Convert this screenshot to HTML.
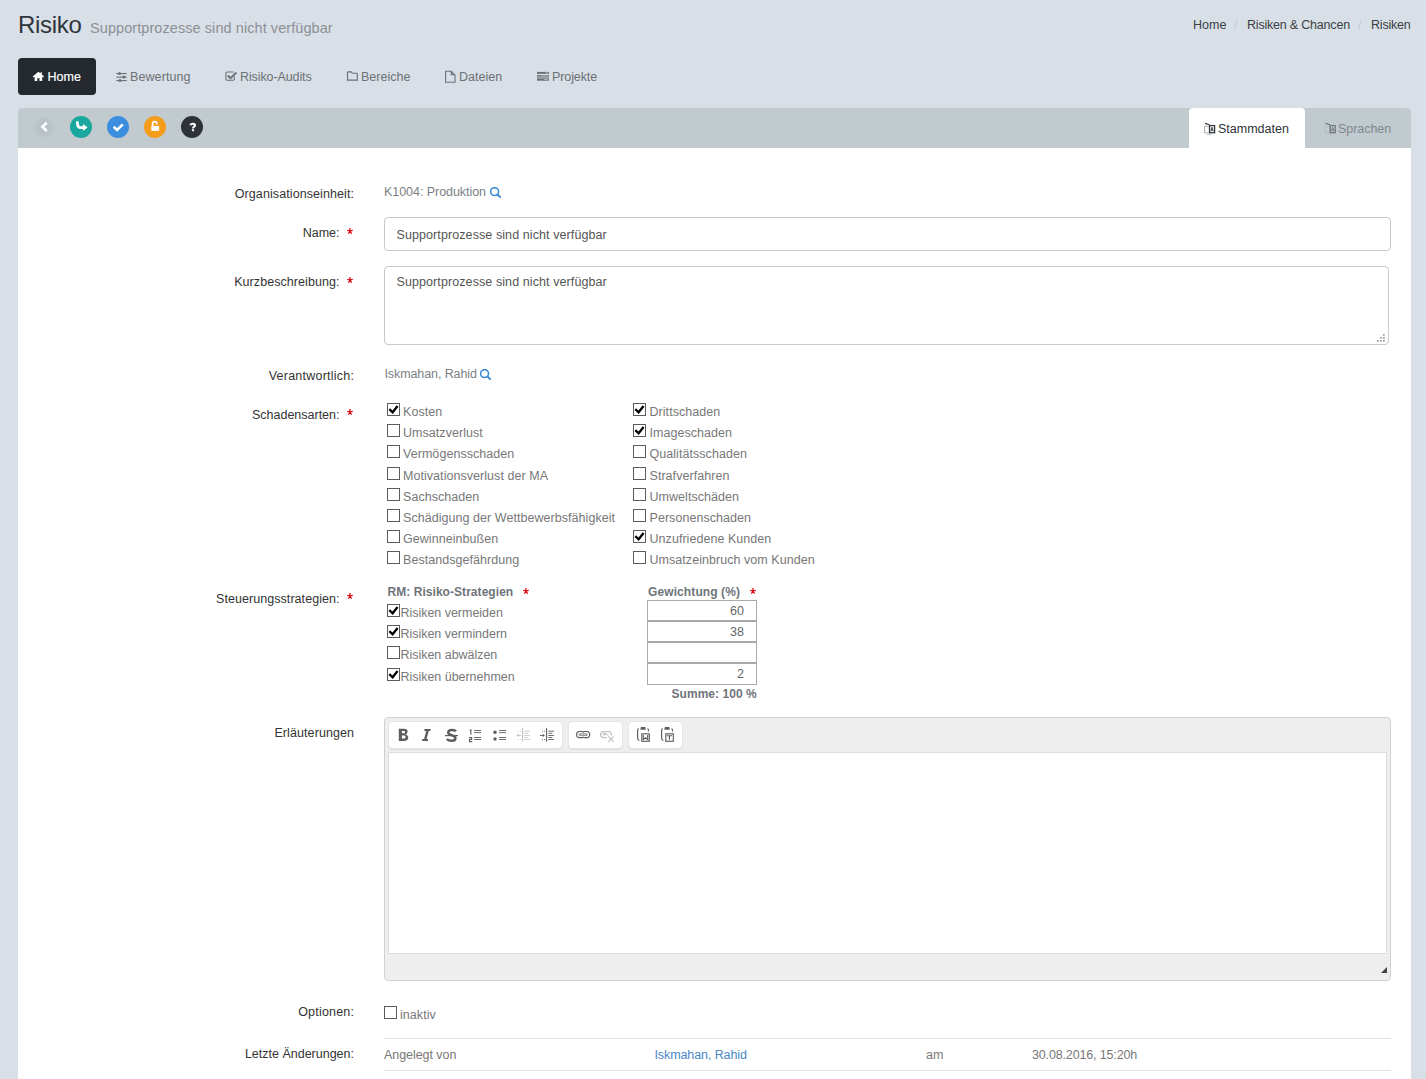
<!DOCTYPE html><html><head><meta charset="utf-8"><style>
*{box-sizing:border-box}
html,body{margin:0;padding:0}
body{width:1426px;height:1079px;overflow:hidden;background:#d9dfe6;font-family:"Liberation Sans",sans-serif;font-size:12.5px;color:#333;position:relative}
.t{position:absolute;white-space:nowrap;line-height:18px}
.lbl{position:absolute;white-space:nowrap;line-height:18px;color:#333}
.ast{position:absolute;color:#d0121b;font-size:14px;line-height:18px;left:347px}
.cb{position:absolute;width:13px;height:13px;border:1px solid #5c5c5c;background:#fff}
.cb svg{position:absolute;left:-1px;top:-1px}
.cbl{position:absolute;white-space:nowrap;line-height:18px;color:#777;letter-spacing:0.05px}
.nav{position:absolute;white-space:nowrap;line-height:18px;color:#6f747a;top:68px}
svg{display:block}
.ic{position:absolute}
</style></head><body>
<div class="t" style="left:18px;top:10px;font-size:24px;line-height:30px;color:#2f353b;letter-spacing:-0.3px">Risiko</div>
<div class="t" style="left:90px;top:18px;font-size:14.5px;line-height:20px;color:#8c9096;letter-spacing:0.07px">Supportprozesse sind nicht verfügbar</div>
<div class="t" style="left:1193px;top:16px;color:#3a3f45">Home</div>
<div class="t" style="left:1234px;top:16px;color:#c3c9cf">/</div>
<div class="t" style="left:1247px;top:16px;color:#3a3f45;letter-spacing:-0.2px">Risiken &amp; Chancen</div>
<div class="t" style="left:1358px;top:16px;color:#c3c9cf">/</div>
<div class="t" style="left:1371px;top:16px;color:#3a3f45;letter-spacing:-0.2px">Risiken</div>
<div style="position:absolute;left:18px;top:58px;width:78px;height:37px;background:#24292f;border-radius:4px"></div>
<svg class="ic" style="left:0;top:60px" width="620" height="30" viewBox="0 60 620 30">
<path d="M38.4 71.7 L32.7 76.6 L33.6 77.5 L34.6 76.7 V81.1 H37.3 V78.3 H39.5 V81.1 H42.2 V76.7 L43.2 77.5 L44.1 76.6 L41.9 74.7 V72.2 H40.6 V73.5 Z" fill="#fff"/>
<g fill="#6c7177"><rect x="116.3" y="73" width="10.5" height="1.1"/><rect x="116.3" y="76.6" width="10.5" height="1.1"/><rect x="116.3" y="80" width="10.5" height="1.1"/>
<circle cx="119.5" cy="73.5" r="1.5"/><circle cx="123.9" cy="77.1" r="1.5"/><circle cx="120" cy="80.5" r="1.5"/></g>
<path d="M234.3 76.5 V79 Q234.3 80.2 233.1 80.2 H227.1 Q225.9 80.2 225.9 79 V73.2 Q225.9 72 227.1 72 H233.5" fill="none" stroke="#6c7177" stroke-width="1.1"/>
<path d="M227.8 75.5 L230.5 78.2 L236.4 72.6" fill="none" stroke="#6c7177" stroke-width="2"/>
<path d="M347.5 80.1 V72.6 Q347.5 71.9 348.2 71.9 H351.2 L352.3 73.2 H356.6 Q357.3 73.2 357.3 73.9 V80.1 Z" fill="none" stroke="#6c7177" stroke-width="1.15"/>
<path d="M445.6 82.2 V71.3 H451.2 L455 75 V82.2 Z M451.2 71.3 V74.6 H455" fill="none" stroke="#6c7177" stroke-width="1.1" stroke-linejoin="miter"/>
<rect x="537" y="71.9" width="12" height="2" fill="#6c7177"/><rect x="537" y="75.1" width="12" height="1.6" fill="#6c7177"/><rect x="537" y="76.7" width="12" height="1.5" fill="#9aa0a5"/><rect x="537" y="78.4" width="12" height="2.3" fill="#6c7177"/>
<rect x="545.5" y="72.4" width="2.5" height="0.9" fill="#b5bbc0"/><rect x="541.3" y="75.5" width="6.7" height="0.8" fill="#b5bbc0"/><rect x="544" y="78.9" width="4" height="0.9" fill="#b5bbc0"/>
</svg>
<div class="nav" style="left:47.5px;color:#fff;font-weight:normal;letter-spacing:0px;-webkit-text-stroke:0.15px #fff">Home</div>
<div class="nav" style="left:130px;letter-spacing:0.1px;color:#6c7177">Bewertung</div>
<div class="nav" style="left:240px;letter-spacing:-0.1px;color:#6c7177">Risiko-Audits</div>
<div class="nav" style="left:361px;letter-spacing:0px;color:#6c7177">Bereiche</div>
<div class="nav" style="left:459px;letter-spacing:0px;color:#6c7177">Dateien</div>
<div class="nav" style="left:552px;letter-spacing:-0.1px;color:#6c7177">Projekte</div>
<div style="position:absolute;left:18px;top:108px;width:1393px;height:40px;background:#c0cacf;border-radius:4px 4px 0 0"></div>
<svg class="ic" style="left:18px;top:108px" width="200" height="40" viewBox="18 108 200 40">
<defs><radialGradient id="gb" cx="0.5" cy="0.5" r="0.5"><stop offset="0.6" stop-color="#b8c2c8"/><stop offset="1" stop-color="#c0cacf"/></radialGradient></defs>
<circle cx="44" cy="127" r="11.5" fill="url(#gb)"/>
<path d="M46.8 122.6 L42.4 126.8 L46.8 131" fill="none" stroke="#fff" stroke-width="2.6" stroke-linejoin="miter"/>
<circle cx="81" cy="127" r="11" fill="#1aa89e"/>
<path d="M77.4 121.3 Q77 127.6 80.6 127.6 H83.6" fill="none" stroke="#fff" stroke-width="2.8"/>
<path d="M83 123.9 L87.6 127.4 L83 130.8 Z" fill="#fff"/>
<circle cx="118" cy="127" r="11" fill="#3b8fde"/>
<path d="M113.6 126.8 L117.1 130 L122.8 124.3" fill="none" stroke="#fff" stroke-width="2.6"/>
<circle cx="155" cy="127" r="11" fill="#f49d1d"/>
<path d="M152.6 126.3 V123.6 Q152.6 121.7 154.7 121.7 Q156.8 121.7 156.8 123.6 V124.4" fill="none" stroke="#fff" stroke-width="1.7"/>
<rect x="151.3" y="126" width="7.8" height="4.9" fill="#fff"/>
<circle cx="192" cy="127" r="11" fill="#2d3237"/>
<path d="M190.6 125.3 Q190.6 123.8 192.9 123.8 Q195 123.8 195 125.3 Q195 126.4 193.9 126.9 Q193 127.3 193 128.6" fill="none" stroke="#fff" stroke-width="2.1"/>
<rect x="191.9" y="129.3" width="2.2" height="1.9" fill="#fff"/>
</svg>
<div style="position:absolute;left:1189px;top:108px;width:116px;height:41px;background:#fff;border-radius:4px 4px 0 0"></div>
<svg class="ic" style="left:1200px;top:118px" width="200" height="20" viewBox="1200 118 200 20">
<g id="ti">
<rect x="1204.5" y="126.3" width="4.8" height="6.4" fill="none" stroke="#b0b3b6" stroke-width="1"/>
<path d="M1205 123.4 L1209.5 124.8" stroke="#2f353b" stroke-width="1.2"/>
<rect x="1209.6" y="125.6" width="5" height="7.1" fill="none" stroke="#2f353b" stroke-width="1.3"/>
<path d="M1211 131.2 L1212.1 127.3 L1213.2 131.2 M1211.4 130 H1212.8" fill="none" stroke="#2f353b" stroke-width="0.9"/>
<path d="M1206.5 134.2 Q1208.5 135 1211 134.2" fill="none" stroke="#b0b3b6" stroke-width="0.9"/>
</g>
<g transform="translate(120.6 0)" opacity="0.55"><use href="#ti"/></g>
</svg>
<div class="t" style="left:1218px;top:120px;color:#2f353b;letter-spacing:0px">Stammdaten</div>
<div class="t" style="left:1338px;top:120px;color:#80878d;letter-spacing:-0.05px">Sprachen</div>
<div style="position:absolute;left:18px;top:148px;width:1393px;height:940px;background:#fff"></div>
<div class="lbl" style="right:1071.91px;top:185px;letter-spacing:0.09px">Organisationseinheit:</div>
<div class="t" style="left:384px;top:182.5px;color:#7b7f84;letter-spacing:-0.05px">K1004: Produktion</div>
<div class="ic" style="left:489.8px;top:187px"><svg width="12" height="12" viewBox="0 0 12 12"><circle cx="4.6" cy="4.6" r="3.95" fill="none" stroke="#3b8ad6" stroke-width="1.55"/><path d="M7.5 7.5 L10.2 10.2" stroke="#3b8ad6" stroke-width="1.9" stroke-linecap="round"/></svg></div>
<div class="lbl" style="right:1086.5px;top:223.5px;letter-spacing:0px">Name:</div>
<svg class="ic" style="left:346.2px;top:226.9px" width="8" height="8" viewBox="346.2 226.9 8 8"><path d="M350.2 230.9 V228.0 M350.2 230.9 L347.4 230.3 M350.2 230.9 L353.0 230.3 M350.2 230.9 L348.59999999999997 233.70000000000002 M350.2 230.9 L351.8 233.70000000000002" stroke="#dc0a12" stroke-width="1.25" stroke-linecap="butt"/></svg>
<div style="position:absolute;left:384px;top:217px;width:1007px;height:34px;border:1px solid #c9c9c9;border-radius:4px;background:#fff"></div>
<div class="t" style="left:396.5px;top:226.2px;color:#555;letter-spacing:0.09px">Supportprozesse sind nicht verfügbar</div>
<div class="lbl" style="right:1086.43px;top:272.5px;letter-spacing:0.07px">Kurzbeschreibung:</div>
<svg class="ic" style="left:346.2px;top:275.9px" width="8" height="8" viewBox="346.2 275.9 8 8"><path d="M350.2 279.9 V277.0 M350.2 279.9 L347.4 279.29999999999995 M350.2 279.9 L353.0 279.29999999999995 M350.2 279.9 L348.59999999999997 282.7 M350.2 279.9 L351.8 282.7" stroke="#dc0a12" stroke-width="1.25" stroke-linecap="butt"/></svg>
<div style="position:absolute;left:384px;top:266px;width:1005px;height:79px;border:1px solid #c9c9c9;border-radius:4px;background:#fff"></div>
<div class="t" style="left:396.5px;top:273.2px;color:#555;letter-spacing:0.09px">Supportprozesse sind nicht verfügbar</div>
<svg class="ic" style="left:1370px;top:328px" width="20" height="20" viewBox="1370 328 20 20"><g fill="#999"><rect x="1383" y="334" width="1.7" height="1.7"/><rect x="1380" y="337" width="1.7" height="1.7"/><rect x="1383" y="337" width="1.7" height="1.7"/><rect x="1377" y="340" width="1.7" height="1.7"/><rect x="1380" y="340" width="1.7" height="1.7"/><rect x="1383" y="340" width="1.7" height="1.7"/></g></svg>
<div class="lbl" style="right:1071.76px;top:366.5px;letter-spacing:0.24px">Verantwortlich:</div>
<div class="t" style="left:384.5px;top:365px;color:#7b7f84;letter-spacing:-0.1px">Iskmahan, Rahid</div>
<div class="ic" style="left:479.5px;top:368.5px"><svg width="12" height="12" viewBox="0 0 12 12"><circle cx="4.6" cy="4.6" r="3.95" fill="none" stroke="#3b8ad6" stroke-width="1.55"/><path d="M7.5 7.5 L10.2 10.2" stroke="#3b8ad6" stroke-width="1.9" stroke-linecap="round"/></svg></div>
<div class="lbl" style="right:1086.5px;top:406px;letter-spacing:0px">Schadensarten:</div>
<svg class="ic" style="left:346.2px;top:408.4px" width="8" height="8" viewBox="346.2 408.4 8 8"><path d="M350.2 412.4 V409.5 M350.2 412.4 L347.4 411.79999999999995 M350.2 412.4 L353.0 411.79999999999995 M350.2 412.4 L348.59999999999997 415.2 M350.2 412.4 L351.8 415.2" stroke="#dc0a12" stroke-width="1.25" stroke-linecap="butt"/></svg>
<div class="cb" style="left:387px;top:403px"><svg width="13" height="13" viewBox="0 0 13 13"><path d="M2.3 6.2 L5.6 9.3 L10.6 3.0" fill="none" stroke="#000" stroke-width="2.3" stroke-linecap="butt" stroke-linejoin="miter"/></svg></div>
<div class="cbl" style="left:403px;top:402.7px;">Kosten</div>
<div class="cb" style="left:633px;top:403px"><svg width="13" height="13" viewBox="0 0 13 13"><path d="M2.3 6.2 L5.6 9.3 L10.6 3.0" fill="none" stroke="#000" stroke-width="2.3" stroke-linecap="butt" stroke-linejoin="miter"/></svg></div>
<div class="cbl" style="left:649.5px;top:402.7px;">Drittschaden</div>
<div class="cb" style="left:387px;top:424px"></div>
<div class="cbl" style="left:403px;top:423.7px;">Umsatzverlust</div>
<div class="cb" style="left:633px;top:424px"><svg width="13" height="13" viewBox="0 0 13 13"><path d="M2.3 6.2 L5.6 9.3 L10.6 3.0" fill="none" stroke="#000" stroke-width="2.3" stroke-linecap="butt" stroke-linejoin="miter"/></svg></div>
<div class="cbl" style="left:649.5px;top:423.7px;">Imageschaden</div>
<div class="cb" style="left:387px;top:445px"></div>
<div class="cbl" style="left:403px;top:444.7px;">Vermögensschaden</div>
<div class="cb" style="left:633px;top:445px"></div>
<div class="cbl" style="left:649.5px;top:444.7px;">Qualitätsschaden</div>
<div class="cb" style="left:387px;top:467px"></div>
<div class="cbl" style="left:403px;top:466.7px;">Motivationsverlust der MA</div>
<div class="cb" style="left:633px;top:467px"></div>
<div class="cbl" style="left:649.5px;top:466.7px;">Strafverfahren</div>
<div class="cb" style="left:387px;top:488px"></div>
<div class="cbl" style="left:403px;top:487.7px;">Sachschaden</div>
<div class="cb" style="left:633px;top:488px"></div>
<div class="cbl" style="left:649.5px;top:487.7px;">Umweltschäden</div>
<div class="cb" style="left:387px;top:509px"></div>
<div class="cbl" style="left:403px;top:508.70000000000005px;">Schädigung der Wettbewerbsfähigkeit</div>
<div class="cb" style="left:633px;top:509px"></div>
<div class="cbl" style="left:649.5px;top:508.70000000000005px;">Personenschaden</div>
<div class="cb" style="left:387px;top:530px"></div>
<div class="cbl" style="left:403px;top:529.7px;">Gewinneinbußen</div>
<div class="cb" style="left:633px;top:530px"><svg width="13" height="13" viewBox="0 0 13 13"><path d="M2.3 6.2 L5.6 9.3 L10.6 3.0" fill="none" stroke="#000" stroke-width="2.3" stroke-linecap="butt" stroke-linejoin="miter"/></svg></div>
<div class="cbl" style="left:649.5px;top:529.7px;">Unzufriedene Kunden</div>
<div class="cb" style="left:387px;top:551px"></div>
<div class="cbl" style="left:403px;top:550.7px;">Bestandsgefährdung</div>
<div class="cb" style="left:633px;top:551px"></div>
<div class="cbl" style="left:649.5px;top:550.7px;">Umsatzeinbruch vom Kunden</div>
<div class="lbl" style="right:1086.44px;top:589.6px;letter-spacing:0.06px">Steuerungsstrategien:</div>
<svg class="ic" style="left:346.2px;top:592.0px" width="8" height="8" viewBox="346.2 592.0 8 8"><path d="M350.2 596.0 V593.1 M350.2 596.0 L347.4 595.4 M350.2 596.0 L353.0 595.4 M350.2 596.0 L348.59999999999997 598.8 M350.2 596.0 L351.8 598.8" stroke="#dc0a12" stroke-width="1.25" stroke-linecap="butt"/></svg>
<div class="t" style="left:387.5px;top:583px;font-weight:bold;font-size:12px;color:#6f747a;letter-spacing:0.05px">RM: Risiko-Strategien</div>
<svg class="ic" style="left:522px;top:586.5px" width="8" height="8" viewBox="522 586.5 8 8"><path d="M526 590.5 V587.6 M526 590.5 L523.2 589.9 M526 590.5 L528.8 589.9 M526 590.5 L524.4 593.3 M526 590.5 L527.6 593.3" stroke="#dc0a12" stroke-width="1.25" stroke-linecap="butt"/></svg>
<div class="t" style="left:648px;top:583px;font-weight:bold;font-size:12px;color:#6f747a;letter-spacing:0.1px">Gewichtung (%)</div>
<svg class="ic" style="left:748.5px;top:586.5px" width="8" height="8" viewBox="748.5 586.5 8 8"><path d="M752.5 590.5 V587.6 M752.5 590.5 L749.7 589.9 M752.5 590.5 L755.3 589.9 M752.5 590.5 L750.9 593.3 M752.5 590.5 L754.1 593.3" stroke="#dc0a12" stroke-width="1.25" stroke-linecap="butt"/></svg>
<div class="cb" style="left:387px;top:604px"><svg width="13" height="13" viewBox="0 0 13 13"><path d="M2.3 6.2 L5.6 9.3 L10.6 3.0" fill="none" stroke="#000" stroke-width="2.3" stroke-linecap="butt" stroke-linejoin="miter"/></svg></div>
<div class="cbl" style="left:400.5px;top:603.7px;letter-spacing:-0.03px">Risiken vermeiden</div>
<div style="position:absolute;left:647px;top:600px;width:110px;height:21px;border:1px solid #a9a9a9;background:#fff"></div>
<div class="t" style="left:647px;width:97px;text-align:right;top:602px;color:#666">60</div>
<div class="cb" style="left:387px;top:625px"><svg width="13" height="13" viewBox="0 0 13 13"><path d="M2.3 6.2 L5.6 9.3 L10.6 3.0" fill="none" stroke="#000" stroke-width="2.3" stroke-linecap="butt" stroke-linejoin="miter"/></svg></div>
<div class="cbl" style="left:400.5px;top:624.7px;letter-spacing:-0.03px">Risiken vermindern</div>
<div style="position:absolute;left:647px;top:621px;width:110px;height:21px;border:1px solid #a9a9a9;background:#fff"></div>
<div class="t" style="left:647px;width:97px;text-align:right;top:623px;color:#666">38</div>
<div class="cb" style="left:387px;top:646px"></div>
<div class="cbl" style="left:400.5px;top:645.7px;letter-spacing:-0.03px">Risiken abwälzen</div>
<div style="position:absolute;left:647px;top:642px;width:110px;height:21px;border:1px solid #a9a9a9;background:#fff"></div>
<div class="cb" style="left:387px;top:668px"><svg width="13" height="13" viewBox="0 0 13 13"><path d="M2.3 6.2 L5.6 9.3 L10.6 3.0" fill="none" stroke="#000" stroke-width="2.3" stroke-linecap="butt" stroke-linejoin="miter"/></svg></div>
<div class="cbl" style="left:400.5px;top:667.7px;letter-spacing:-0.03px">Risiken übernehmen</div>
<div style="position:absolute;left:647px;top:663px;width:110px;height:21.5px;border:1px solid #a9a9a9;background:#fff"></div>
<div class="t" style="left:647px;width:97px;text-align:right;top:665px;color:#666">2</div>
<div class="t" style="left:671.5px;top:684.6px;font-weight:bold;font-size:12px;color:#6f747a;letter-spacing:0.05px">Summe: 100 %</div>
<div class="lbl" style="right:1071.91px;top:723.6px;letter-spacing:0.09px">Erläuterungen</div>
<div style="position:absolute;left:384px;top:717px;width:1007px;height:264px;border:1px solid #d1d1d1;border-radius:4px;background:#eee"></div>
<div style="position:absolute;left:388px;top:752px;width:999px;height:202px;border:1px solid #dcdcdc;background:#fff"></div>
<div style="position:absolute;left:388.5px;top:722px;width:173.0px;height:26px;background:#fff;border-radius:4px;box-shadow:0 0 0 1px #e6e6e6,0 1px 0 1px #dcdcdc"></div>
<div style="position:absolute;left:568.5px;top:722px;width:53.0px;height:26px;background:#fff;border-radius:4px;box-shadow:0 0 0 1px #e6e6e6,0 1px 0 1px #dcdcdc"></div>
<div style="position:absolute;left:628.5px;top:722px;width:53.0px;height:26px;background:#fff;border-radius:4px;box-shadow:0 0 0 1px #e6e6e6,0 1px 0 1px #dcdcdc"></div>
<svg class="ic" style="left:1380px;top:966px" width="8" height="8" viewBox="0 0 8 8"><path d="M7 1 V7 H1 Z" fill="#444"/></svg>
<svg class="ic" style="left:384px;top:717px" width="310" height="34" viewBox="384 717 310 34">
<path fill-rule="evenodd" fill="#5e5e5e" d="M398.8 728.8 H404.2 C406.6 728.8 407.6 730 407.6 731.5 C407.6 732.9 406.8 733.9 405.8 734.4 C407.3 734.8 408.3 736 408.3 737.6 C408.3 739.6 407 740.9 404.6 740.9 H398.8 Z M401.9 731.1 H403.9 C404.7 731.1 405 731.6 405 732.2 C405 732.8 404.6 733.3 403.9 733.3 H401.9 Z M401.9 735.6 H404.2 C405.1 735.6 405.5 736.2 405.5 737.1 C405.5 737.9 405 738.6 404.2 738.6 H401.9 Z"/>
<path fill="#5e5e5e" d="M424.6 729.1 H430.7 L430.4 730.9 H428.7 L426.6 739.1 H428.3 L427.9 740.9 H422 L422.4 739.1 H424.1 L426.2 730.9 H424.3 Z"/>
<path fill="none" stroke="#5e5e5e" stroke-width="2.5" d="M456 731.3 C455.2 730.2 453.8 729.9 452.2 729.9 C449.8 729.9 448.2 730.8 448.2 732.5 C448.2 734.3 449.9 734.8 451.8 735.3 C453.9 735.8 455.4 736.4 455.4 738.2 C455.4 739.9 453.8 740.8 451.4 740.8 C449.6 740.8 448 740.3 446.8 739.2"/>
<rect x="445" y="735" width="13" height="1.2" fill="#5e5e5e"/>
<g fill="none" stroke="#5e5e5e" stroke-width="1.1">
<path d="M469.7 730.6 L470.9 730 V734.8"/>
<path d="M469 737.5 H471.7 V739.4 H469.5 V741.6 H472.2"/>
</g>
<g fill="#5e5e5e">
<rect x="474.1" y="730.1" width="7" height="0.9"/><rect x="474.1" y="732.2" width="7" height="0.9"/><rect x="474.1" y="737" width="7" height="0.9"/><rect x="474.1" y="739.1" width="7" height="0.9"/>
<circle cx="495" cy="732.2" r="1.7"/><circle cx="495" cy="739" r="1.7"/>
<rect x="499.1" y="730.1" width="7" height="0.9"/><rect x="499.1" y="732.2" width="7" height="0.9"/><rect x="499.1" y="737" width="7" height="0.9"/><rect x="499.1" y="739.1" width="7" height="0.9"/>
</g>
<g fill="#c2c2c2">
<rect x="518" y="730.7" width="0.9" height="0.9"/><rect x="520" y="730.7" width="0.9" height="0.9"/><rect x="518" y="739.1" width="0.9" height="0.9"/><rect x="520" y="739.1" width="0.9" height="0.9"/>
<path d="M516.3 735.4 L518.6 733.7 V737.1 Z"/><rect x="518" y="735" width="3" height="0.9"/>
<rect x="522" y="728.2" width="1.1" height="13.4"/>
<rect x="524.2" y="730.7" width="5.8" height="0.8"/><rect x="524.2" y="732.8" width="4" height="0.8"/><rect x="524.2" y="735" width="5.8" height="0.8"/><rect x="524.2" y="737.1" width="4" height="0.8"/><rect x="524.2" y="739.1" width="5.8" height="0.8"/>
</g>
<g fill="#5e5e5e">
<rect x="542" y="730.7" width="0.9" height="0.9"/><rect x="544" y="730.7" width="0.9" height="0.9"/><rect x="542" y="739.1" width="0.9" height="0.9"/><rect x="544" y="739.1" width="0.9" height="0.9"/>
<path d="M545 735.4 L542.7 733.7 V737.1 Z"/><rect x="540" y="735" width="3" height="0.9"/>
<rect x="546" y="728.2" width="1.1" height="13.4"/>
<rect x="548.3" y="730.7" width="5.6" height="0.9"/><rect x="548.3" y="732.8" width="4" height="0.9"/><rect x="548.3" y="735" width="5.6" height="0.9"/><rect x="548.3" y="737.1" width="4" height="0.9"/><rect x="548.3" y="739.1" width="5.6" height="0.9"/>
</g>
<g fill="none" stroke="#5e5e5e">
<path stroke-width="1.2" d="M578.4 731.5 H582.3 L583.2 732.1 L584.1 731.5 H588 L589.6 733.2 V736.1 L588 737.7 H584.1 L583.2 737.1 L582.3 737.7 H578.4 L576.7 736.1 V733.2 Z"/>
<path stroke-width="0.8" d="M579.4 733.9 H587 M579.4 735.3 H587"/>
<path stroke-width="0.8" d="M579.4 733.9 Q578.7 734.6 579.4 735.3 M587 733.9 Q587.7 734.6 587 735.3"/>
</g>
<g fill="none" stroke="#c2c2c2">
<path stroke-width="1.3" d="M611.4 735.5 V733.4 L609.6 731.6 H602.6 L600.7 733.4 V735.9 L602.6 737.6 H607"/>
<path stroke-width="1.1" d="M608.6 734.8 H603.9 Q603.1 734.8 603.1 734.1 Q603.1 733.5 603.9 733.5 H606.3"/>
<path stroke-width="1.2" d="M608.3 736.3 L613.6 741.8 M613.6 736.3 L608.3 741.8"/>
</g>
</svg>
<svg class="ic" style="left:630px;top:717px" width="60" height="34" viewBox="630 717 60 34">
<path d="M638.6 728.5 Q637.6 729 637.6 730.5 V738.8 Q637.6 740.3 639.4 740.3" fill="none" stroke="#5e5e5e" stroke-width="1.15"/>
<path d="M647.5 728.5 Q648.5 729 648.5 730.3 V731.6" fill="none" stroke="#5e5e5e" stroke-width="1.15"/>
<path d="M640.3 729.8 L640.9 727.1 H645.2 L645.9 729.8 Z" fill="#5e5e5e"/>
<rect x="641.8" y="733.8" width="7.5" height="7.5" fill="none" stroke="#5e5e5e" stroke-width="1.15"/>
<path d="M643.3 735.1 V739.5 L645.5 737.7 L647.7 739.5 V735.1" fill="none" stroke="#5e5e5e" stroke-width="1.1"/>
</svg>
<svg class="ic" style="left:630px;top:717px" width="60" height="34" viewBox="630 717 60 34">
<path d="M662.6 728.5 Q661.6 729 661.6 730.5 V738.8 Q661.6 740.3 663.4 740.3" fill="none" stroke="#5e5e5e" stroke-width="1.15"/>
<path d="M671.5 728.5 Q672.5 729 672.5 730.3 V731.6" fill="none" stroke="#5e5e5e" stroke-width="1.15"/>
<path d="M664.3 729.8 L664.9 727.1 H669.2 L669.9 729.8 Z" fill="#5e5e5e"/>
<rect x="665.8" y="733.8" width="7.5" height="7.5" fill="none" stroke="#5e5e5e" stroke-width="1.15"/>
<path d="M666.9 735.8 H671.9 M669.4 735.8 V739.8" fill="none" stroke="#5e5e5e" stroke-width="1.1"/>
</svg>
<div class="lbl" style="right:1071.8px;top:1003px;letter-spacing:0.2px">Optionen:</div>
<div class="cb" style="left:384px;top:1006px"></div>
<div class="cbl" style="left:400px;top:1005.5px;">inaktiv</div>
<div class="lbl" style="right:1072px;top:1044.6px;letter-spacing:0px">Letzte Änderungen:</div>
<div style="position:absolute;left:384px;top:1038px;width:1007px;height:1px;background:#e3e3e3"></div>
<div style="position:absolute;left:384px;top:1070px;width:1007px;height:1px;background:#e3e3e3"></div>
<div class="t" style="left:384px;top:1046px;color:#777;letter-spacing:-0.05px">Angelegt von</div>
<div class="t" style="left:654.5px;top:1046px;color:#4a87c6;letter-spacing:-0.1px">Iskmahan, Rahid</div>
<div class="t" style="left:926px;top:1046px;color:#777">am</div>
<div class="t" style="left:1032px;top:1046px;color:#777;letter-spacing:-0.15px">30.08.2016, 15:20h</div>
</body></html>
